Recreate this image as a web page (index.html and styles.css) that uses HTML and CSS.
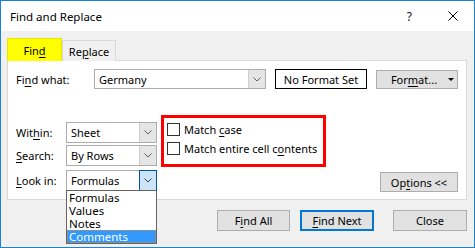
FILE: index.html
```html
<!DOCTYPE html>
<html lang="en">
<head>
    <meta charset="UTF-8">
    <meta name="viewport" content="width=device-width, initial-scale=1.0">
    <title>Find and Replace</title>
    <link rel="stylesheet" href="styles.css">
</head>
<body>
    <div class="window">
        <div class="titlebar">
            <span class="title">Find and Replace</span>
            <div class="title-controls">
                <span class="help">?</span>
                <svg class="close-x" width="10" height="10" viewBox="0 0 10 10">
                    <path d="M0.5 0.5 L9.5 9.5 M9.5 0.5 L0.5 9.5" stroke="#000" stroke-width="1" fill="none"/>
                </svg>
            </div>
        </div>
        <div class="body">
            <div class="tabs">
                <div class="tab tab-active"><span>Fin<u>d</u></span></div>
                <div class="tab"><span>Re<u>p</u>lace</span></div>
            </div>
            <div class="panel">
                <div class="row-find">
                    <span class="label label-find">Fi<u>n</u>d what:</span>
                    <div class="combo combo-find">
                        <span class="combo-text">Germany</span>
                        <span class="combo-btn">
                            <svg width="8" height="5" viewBox="0 0 8 5"><path d="M0.5 0.5 L4 4 L7.5 0.5" stroke="#606060" fill="none"/></svg>
                        </span>
                    </div>
                    <div class="format-box"><span>No Format Set</span></div>
                    <div class="btn btn-format"><span>For<u>m</u>at...</span><span class="caret"></span></div>
                </div>
                <div class="row-options">
                    <div class="fields">
                        <div class="field">
                            <span class="label">Wit<u>h</u>in:</span>
                            <div class="combo">
                                <span class="combo-text">Sheet</span>
                                <span class="combo-btn">
                                    <svg width="8" height="5" viewBox="0 0 8 5"><path d="M0.5 0.5 L4 4 L7.5 0.5" stroke="#606060" fill="none"/></svg>
                                </span>
                            </div>
                        </div>
                        <div class="field">
                            <span class="label"><u>S</u>earch:</span>
                            <div class="combo">
                                <span class="combo-text">By Rows</span>
                                <span class="combo-btn">
                                    <svg width="8" height="5" viewBox="0 0 8 5"><path d="M0.5 0.5 L4 4 L7.5 0.5" stroke="#606060" fill="none"/></svg>
                                </span>
                            </div>
                        </div>
                        <div class="field field-look">
                            <span class="label"><u>L</u>ook in:</span>
                            <div class="combo combo-open">
                                <span class="combo-text">Formulas</span>
                                <span class="combo-btn">
                                    <svg width="8" height="5" viewBox="0 0 8 5"><path d="M0.5 0.5 L4 4 L7.5 0.5" stroke="#404040" fill="none"/></svg>
                                </span>
                                <ul class="dropdown-list">
                                    <li>Formulas</li>
                                    <li>Values</li>
                                    <li>Notes</li>
                                    <li class="selected">Comments</li>
                                </ul>
                            </div>
                        </div>
                    </div>
                    <div class="checks">
                        <label class="check"><span class="checkbox"></span><span>Match <u>c</u>ase</span></label>
                        <label class="check"><span class="checkbox"></span><span>Match entire cell c<u>o</u>ntents</span></label>
                    </div>
                    <div class="btn btn-options"><span>Op<u>t</u>ions &lt;&lt;</span></div>
                </div>
            </div>
            <div class="actions">
                <div class="btn btn-action"><span>F<u>i</u>nd All</span></div>
                <div class="btn btn-action btn-default"><span><u>F</u>ind Next</span></div>
                <div class="btn btn-action btn-close"><span>Close</span></div>
            </div>
        </div>
    </div>
</body>
</html>
```

FILE: styles.css
```css
* { box-sizing: border-box; }
html, body { margin: 0; padding: 0; background: #ffffff; }
body {
    font-family: "Noto Sans", "Open Sans", sans-serif;
    font-size: 11px;
    color: #000;
}
u { text-decoration: underline; text-underline-offset: 2px; }

.window {
    position: relative;
    width: 475px;
    height: 248px;
    border: 1px solid #1883d7;
    background: #f0f0f0;
    overflow: hidden;
}

/* title bar */
.titlebar {
    height: 30px;
    background: #fff;
    display: flex;
    align-items: center;
    justify-content: space-between;
    padding: 0 16px 0 9px;
}
.title { font-size: 11.5px; }
.title-controls { display: flex; align-items: center; gap: 36px; }
.help { font-size: 12px; color: #111; }
.close-x { display: block; }

/* dialog body */
.body { padding: 7px 7px 13px 6px; }
.tabs { display: flex; align-items: flex-end; height: 23px; margin-bottom: -1px; position: relative; z-index: 1; }
.tab {
    height: 21px;
    width: 54px;
    border: 1px solid #d9d9d9;
    border-bottom: none;
    background: #f0f0f0;
    display: flex;
    align-items: center;
    justify-content: center;
}
.tab-active {
    height: 23px;
    width: 55px;
    background: #ffff00;
    border-color: #e6e600;
}

.panel {
    background: #fff;
    border: 1px solid #d9d9d9;
    padding: 8px 8px 8px 8px;
}

.row-find { display: flex; align-items: center; height: 20px; }
.label { display: inline-block; width: 50px; }
.label-find { width: 78px; }

.combo {
    position: relative;
    display: flex;
    align-items: center;
    width: 91px;
    height: 21px;
    border: 1px solid #acacac;
    background: #fff;
}
.combo-find { width: 172px; height: 20px; }
.combo-text { flex: 1; padding-left: 4px; white-space: nowrap; }
.combo-btn {
    width: 17px;
    align-self: stretch;
    background: #e5e5e5;
    border-left: 1px solid #cfcfcf;
    display: flex;
    align-items: center;
    justify-content: center;
}
.combo-btn svg { display: block; }
.combo-open .combo-btn {
    background: #cce4f7;
    border: 1px solid #005499;
    margin: -1px -1px -1px 0;
    width: 18px;
}

.format-box {
    margin-left: 9px;
    width: 92px;
    height: 20px;
    border: 1px solid #000;
    display: flex;
    align-items: center;
    justify-content: center;
    white-space: nowrap;
}

.btn {
    background: #e1e1e1;
    border: 1px solid #adadad;
    display: flex;
    align-items: center;
    justify-content: center;
    white-space: nowrap;
}
.btn-format {
    margin-left: 9px;
    width: 82px;
    height: 19px;
    position: relative;
    padding-right: 6px;
}
.caret {
    position: absolute;
    right: 3px;
    top: 7px;
    border-left: 3px solid transparent;
    border-right: 3px solid transparent;
    border-top: 3px solid #000;
}

/* options area */
.row-options { display: flex; margin-top: 26px; }
.fields { padding-top: 7px; }
.field { display: flex; align-items: center; margin-bottom: 2px; }
.field-look { margin-top: 4px; margin-bottom: 0; }

.checks {
    margin-left: 4px;
    width: 165px;
    height: 52px;
    border: 3px solid #ff0000;
    padding: 5px 0 0 3px;
}
.check { display: flex; align-items: center; height: 13px; margin-bottom: 6px; white-space: nowrap; }
.checkbox {
    width: 13px;
    height: 13px;
    border: 1px solid #333;
    background: #fff;
    margin-right: 4px;
    flex-shrink: 0;
}

.btn-options {
    margin-left: auto;
    align-self: flex-end;
    width: 78px;
    height: 20px;
    margin-bottom: -1px;
}

/* dropdown popup */
.dropdown-list {
    position: absolute;
    left: -1px;
    top: 19px;
    width: 91px;
    margin: 0;
    padding: 0;
    list-style: none;
    background: #fff;
    border: 1px solid #646464;
    z-index: 5;
}
.dropdown-list li { height: 13px; line-height: 13px; padding-left: 2px; font-size: 11.5px; }
.dropdown-list .selected {
    background: #3399ff;
    color: #fff;
    outline: 1px dotted #d08a3c;
    outline-offset: -1px;
}

/* bottom buttons */
.actions { display: flex; justify-content: flex-end; margin-top: 10px; }
.btn-action { width: 73px; height: 21px; }
.btn-default { border: 2px solid #0078d7; margin-left: 10px; width: 74px; }
.btn-close { margin-left: 19px; width: 74px; }
```
